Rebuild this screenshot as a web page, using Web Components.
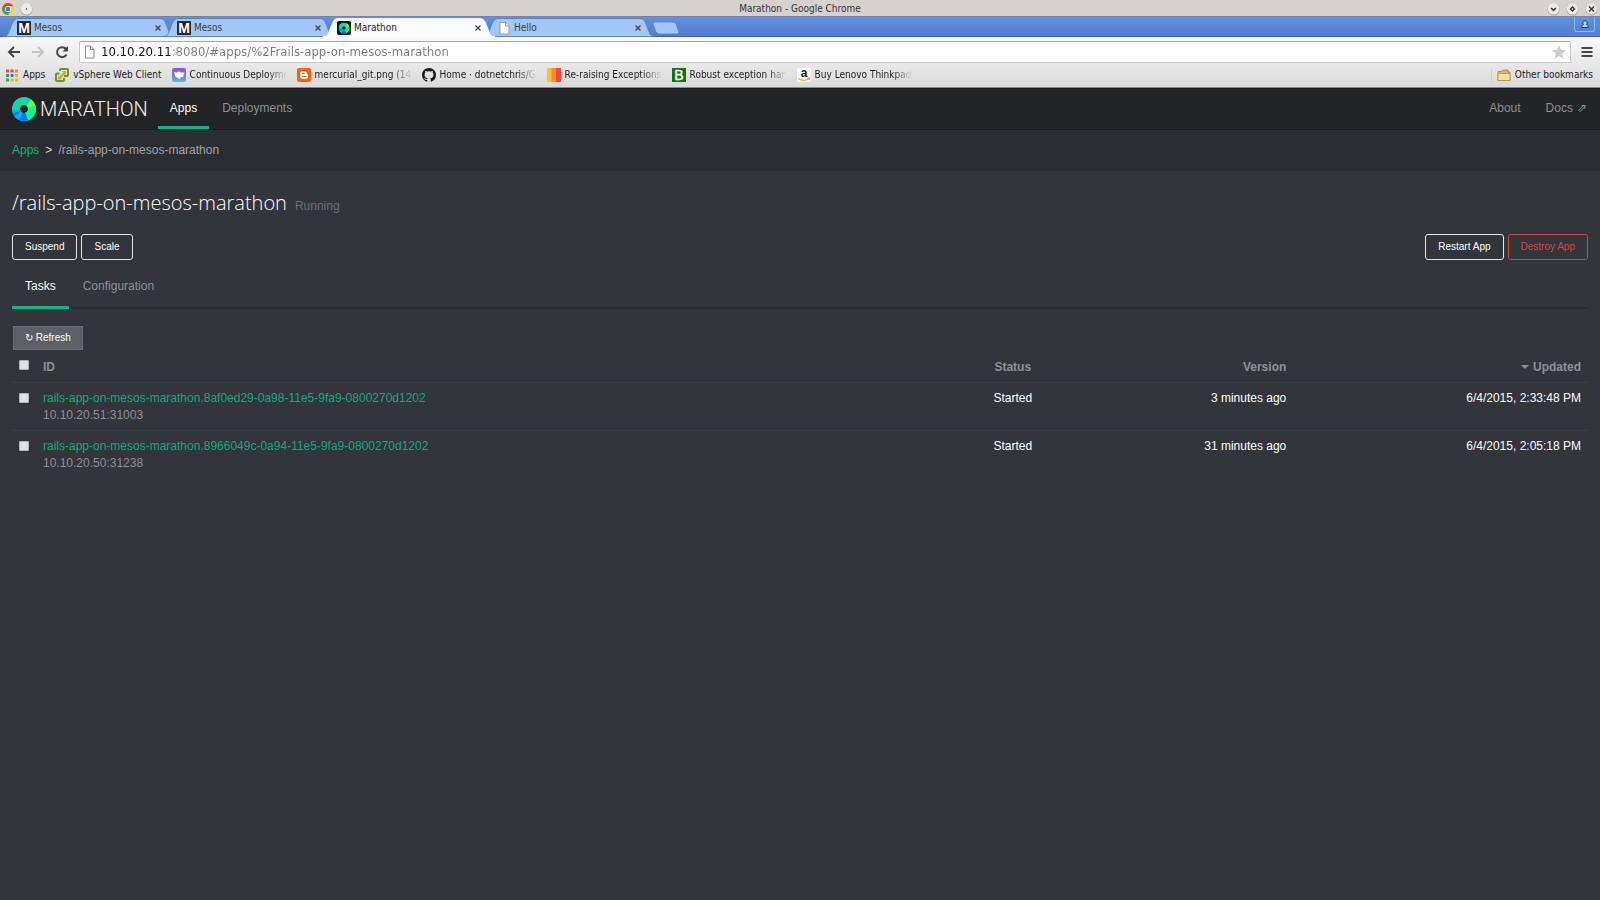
<!DOCTYPE html>
<html lang="en">
<head>
<meta charset="utf-8">
<title>Marathon</title>
<style>
  html,body{margin:0;height:100%}
  body{background:#32353a;font-family:"Liberation Sans",Arial,sans-serif;font-size:12px;line-height:17px;color:#fff}
</style>
</head>
<body>
<browser-window heading="Marathon - Google Chrome">
  <browser-tab slot="tabs" icon="mesos">Mesos</browser-tab>
  <browser-tab slot="tabs" icon="mesos">Mesos</browser-tab>
  <browser-tab slot="tabs" icon="marathon" active>Marathon</browser-tab>
  <browser-tab slot="tabs" icon="page">Hello</browser-tab>

  <book-mark slot="bookmarks" icon="apps">Apps</book-mark>
  <book-mark slot="bookmarks" icon="vsphere">vSphere Web Client</book-mark>
  <book-mark slot="bookmarks" icon="codeship" faded>Continuous Deployme</book-mark>
  <book-mark slot="bookmarks" icon="blogger" faded>mercurial_git.png (14</book-mark>
  <book-mark slot="bookmarks" icon="github" faded>Home · dotnetchris/G</book-mark>
  <book-mark slot="bookmarks" icon="stripes" faded>Re-raising Exceptions</book-mark>
  <book-mark slot="bookmarks" icon="letterb" faded>Robust exception har</book-mark>
  <book-mark slot="bookmarks" icon="amazon" faded>Buy Lenovo Thinkpad</book-mark>
  <book-mark slot="other" icon="folder">Other bookmarks</book-mark>

  <marathon-nav></marathon-nav>
  <marathon-crumbs>/rails-app-on-mesos-marathon</marathon-crumbs>
  <marathon-app name="/rails-app-on-mesos-marathon" status="Running">
    <task-table></task-table>
  </marathon-app>
</browser-window>

<script>
(function () {
  const RING = `
    <g fill="none" stroke-width="8">
      <circle cx="12" cy="12" r="8" stroke="#10d8a8"/>
      <path d="M19.6 9.4A8 8 0 0 1 14.1 19.7" stroke="#00fc9a"/>
      <path d="M14.7 19.5A8 8 0 0 1 8.2 19" stroke="#0078ff"/>
      <path d="M8.8 19.3A8 8 0 0 1 4 12.7" stroke="#08b0fa"/>
      <path d="M5.6 16.8A8 8 0 0 1 4.6 15" stroke="#0078ff"/>
      <path d="M16.8 5.6A8 8 0 0 1 19.6 9.6" stroke="#76f81c"/>
    </g>`;

  // favicons, all on a 14x14 box
  const ICONS = {
    mesos: `<rect width="14" height="14" rx="1" fill="#1b1b1b"/><rect x="1" y="1" width="12" height="12" fill="none" stroke="#555" stroke-width=".5"/><text x="7" y="12" text-anchor="middle" font-family="Liberation Sans" font-weight="700" font-size="14" fill="#fff">M</text>`,
    marathon: `<rect width="14" height="14" rx="2" fill="#0b0b14"/><svg x="1.5" y="1.5" width="11" height="11" viewBox="0 0 24 24">${RING}</svg>`,
    page: `<path d="M3 1.5h5.5L12 5v8H3z" fill="#fff" stroke="#9a9a9a"/><path d="M8.5 1.5V5H12" fill="#eee" stroke="#9a9a9a"/>`,
    apps: `<path d="M1 1.500h3v3H1zM5.500 1.500h3v3h-3z" fill="#e8453c"/><path d="M10 1.500h3v3h-3z" fill="#f08a24"/><path d="M1 6h3v3H1zM1 10.500h3v3H1z" fill="#2f9e4f"/><path d="M5.500 6h3v3h-3z" fill="#3b78e7"/><path d="M10 6h3v3h-3zM5.500 10.500h3v3h-3zM10 10.500h3v3h-3z" fill="#f4b400"/>`,
    vsphere: `<path d="M5 3V2a1 1 0 0 1 1-1h6a1 1 0 0 1 1 1v5a1 1 0 0 1-1 1H9" fill="none" stroke="#5b9b2c" stroke-width="2"/><path d="M4.500 5.500H2a1 1 0 0 0-1 1V12a1 1 0 0 0 1 1h6a1 1 0 0 0 1-1v-2" fill="none" stroke="#5b9b2c" stroke-width="2"/><path d="M3.500 11.500L10.500 3.500" stroke="#e9a52a" stroke-width="2.500"/><path d="M7 3h4v4z" fill="#e9a52a"/><path d="M3 7v4h4z" fill="#e9a52a"/>`,
    codeship: `<linearGradient id="g" x2="0" y2="1"><stop stop-color="#9a55cf"/><stop offset=".5" stop-color="#8a6fd6"/><stop offset="1" stop-color="#4cc4dc"/></linearGradient><rect width="14" height="14" rx="2" fill="url(#g)"/><path d="M2 4l2.500.5L7 3.500l2 1 3.500 0L11 9H9l-1.500 2L5 9.500 3.500 9z" fill="#fff"/>`,
    blogger: `<rect width="14" height="14" rx="2" fill="#f8630d"/><path d="M5.500 3h2.300a2 2 0 0 1 2 2c0 1 .2 1.200 1.200 1.400v2.300A2.300 2.300 0 0 1 8.700 11H5.500A2.300 2.300 0 0 1 3.200 8.700V5.300A2.300 2.300 0 0 1 5.500 3z" fill="#fff"/><path d="M5.500 5.500h2M5.500 8.500h3.200" stroke="#f8630d" stroke-linecap="round" stroke-width="1.200"/>`,
    github: `<path transform="scale(.875)" fill="#1b1b1b" d="M8 0C3.580 0 0 3.580 0 8c0 3.540 2.290 6.530 5.470 7.590.4.070.55-.17.55-.38 0-.19-.01-.82-.01-1.490-2.010.37-2.530-.49-2.690-.94-.09-.23-.48-.94-.82-1.130-.28-.15-.68-.52-.01-.53.63-.01 1.080.58 1.230.82.72 1.210 1.870.87 2.330.66.07-.52.28-.87.51-1.070-1.780-.2-3.640-.89-3.640-3.950 0-.87.31-1.590.82-2.150-.08-.2-.36-1.020.08-2.120 0 0 .67-.21 2.200.82a7.400 7.400 0 0 1 4 0c1.530-1.040 2.200-.82 2.200-.82.44 1.100.16 1.920.08 2.120.51.56.82 1.270.82 2.150 0 3.070-1.870 3.750-3.650 3.950.29.25.54.73.54 1.480 0 1.070-.01 1.930-.01 2.200 0 .21.15.46.55.38A8 8 0 0 0 16 8c0-4.420-3.580-8-8-8z"/>`,
    stripes: `<rect width="14" height="14" rx="1" fill="#f9c22e"/><path d="M4.500 0h5v14h-5z" fill="#f98b32"/><path d="M9 0h4a1 1 0 0 1 1 1v12a1 1 0 0 1-1 1H9z" fill="#f9453f"/>`,
    letterb: `<path d="M0 0h14v14H0z" fill="#0b760b"/><text x="7" y="12" text-anchor="middle" font-family="Liberation Sans" font-size="14" fill="#fff" stroke="#fff" stroke-width=".4">B</text>`,
    amazon: `<rect width="14" height="14" rx="2" fill="#fff"/><text x="7" y="9" text-anchor="middle" font-family="Liberation Sans" font-weight="700" font-size="12" fill="#111">a</text><path d="M1.500 10.500c3 2.500 7.500 2.500 10.500.300M10.500 10.200l2-.2-.5 2" fill="none" stroke="#f2a71b" stroke-width="1.300"/>`,
    folder: `<path d="M1 3.500h4l1-1.500h5v2h2v8.500H1z" fill="#e6b566" stroke="#a8792f" stroke-width=".8"/><path d="M1 5.500h12v7H1z" fill="#fbdf9d" stroke="#b98a40" stroke-width=".8"/>`
  };
  const icon = (name) => `<svg class="icon" width="14" height="14" viewBox="0 0 14 14" aria-hidden="true">${ICONS[name] || ""}</svg>`;

  class Base extends HTMLElement {
    connectedCallback() {
      if (this.shadowRoot) return;
      this.attachShadow({ mode: "open" }).innerHTML =
        `<style>*,*::before,*::after{box-sizing:border-box}button{font:inherit;color:inherit}${this.css()}</style>${this.html()}`;
    }
    css() { return ""; }
    html() { return "<slot></slot>"; }
  }

  class BrowserTab extends Base {
    css() {
      return `
        :host{display:grid;flex:0 0 172px;height:19px;margin-right:-12px;color:#3c3c3c;--fill:#a2c6f5;--line:#5278b4}
        :host([active]){position:relative;z-index:1;color:#222;--fill:#fbfbfb;--line:#fbfbfb}
        .shape,.row{grid-area:1/1}
        .shape{width:100%;height:19px}
        .row{display:flex;align-items:center;gap:3px;padding:0 13px 0 14px}
        .title{flex:1;overflow:hidden;white-space:nowrap}
        button{width:8px;height:8px;padding:0;border:0;background:none;display:flex}
        .icon{flex:none}`;
    }
    html() {
      return `
        <svg class="shape" viewBox="0 0 172 19" preserveAspectRatio="none" aria-hidden="true">
          <path d="M0 19C5 19 5 16 7 11C10 4 10 1 15 .5H157C162 1 162 4 165 11C167 16 167 19 172 19Z" style="fill:var(--fill)"/>
          <path d="M0 18.500C5 18.500 5 16 7 11C10 4 10 1 15 .5H157C162 1 162 4 165 11C167 16 167 18.500 172 18.500Z" fill="none" style="stroke:var(--line)" stroke-width=".8"/>
        </svg>
        <div class="row">${icon(this.getAttribute("icon"))}<span class="title"><slot></slot></span>
          <button aria-label="Close tab"><svg width="8" height="8" viewBox="0 0 8 8"><path d="M1.500 1.500l5 5M6.500 1.500l-5 5" stroke="#444" stroke-width="1.300"/></svg></button>
        </div>`;
    }
  }

  class BookMark extends Base {
    css() {
      return `
        :host{display:block;flex:none}
        a{display:flex;align-items:center;gap:4px;color:#1c1c1c;text-decoration:none;white-space:nowrap}
        .icon{flex:none}
        :host([faded]) span{width:97px;overflow:hidden;-webkit-mask-image:linear-gradient(90deg,#000 80%,transparent);mask-image:linear-gradient(90deg,#000 80%,transparent)}`;
    }
    html() { return `<a href="#">${icon(this.getAttribute("icon"))}<span><slot></slot></span></a>`; }
  }

  class BrowserWindow extends Base {
    css() {
      return `
        :host{display:flex;flex-direction:column;min-height:100%}
        .chrome{font-family:"DejaVu Sans Condensed","DejaVu Sans",sans-serif;font-size:10px;line-height:14px;color:#333}
        button{padding:0;border:0;background:none;display:flex}
        .title{display:grid;grid-template-columns:1fr auto 1fr;align-items:center;height:16px;padding:1px 2px 0;background:#d6d2ce}
        .group{display:flex;align-items:center;gap:6px}
        .right{justify-content:flex-end}
        .strip{display:flex;align-items:flex-end;height:21px;padding-left:3px;background:linear-gradient(#6593e0,#4c7bd0);box-shadow:inset 0 1px #6f84b4,inset 0 -1px #41639f}
        .new{margin:0 0 2px 9px}
        .user{align-self:flex-start;margin:1px 5px 0 auto;width:21px;height:15px;justify-content:center;align-items:center;border:1px solid #82bdf0;border-top:0;border-radius:0 0 3px 3px}
        .tools{background:linear-gradient(#f8f8f8,#dadada);border-bottom:1px solid #8a8a8a}
        .bar{display:flex;align-items:center;height:29px;padding:0 7px;gap:10px}
        .omni{flex:1;display:flex;align-items:center;height:22px;gap:5px;padding:0 4px;background:#fff;border:1px solid #c6c6c6;border-top-color:#a8a8a8;border-radius:2px}
        input{flex:1;min-width:0;padding:0;border:0;outline:0;font:inherit;font-size:13px;line-height:18px;color:transparent;
          background:linear-gradient(90deg,#111 72px,#7b7b7b 72px);-webkit-background-clip:text;background-clip:text}
        .marks{display:flex;align-items:center;height:21px;padding:0 7px 4px 5px;gap:10px}
        .other{margin-left:auto;border-left:1px solid #c4d8da;padding-left:5px}
        main{flex:1;display:flex;flex-direction:column}`;
    }
    html() {
      const knob = (label, d) => `<button aria-label="${label}"><svg width="13" height="14" viewBox="0 0 13 14"><circle cx="6.500" cy="7.500" r="6" fill="#9f9b98"/><circle cx="6.500" cy="6.800" r="5.800" fill="#eceae8"/><path d="${d}" fill="none" stroke="#333" stroke-width="1.400"/></svg></button>`;
      return `
        <div class="chrome">
          <div class="title">
            <div class="group">
              <svg width="12" height="12" viewBox="0 0 24 24" aria-hidden="true"><circle cx="12" cy="12" r="12" fill="#f7cf2c"/><path d="M1.600 6A12 12 0 0 0 12 24l5-9-5-3z" fill="#3fa651"/><path d="M12 6h10.400A12 12 0 0 0 1.600 6L7 15z" fill="#df4230"/><circle cx="12" cy="12" r="5.800" fill="#fff"/><circle cx="12" cy="12" r="4.600" fill="#3f7fdc"/></svg>
              ${knob("Window menu", "M6 7h1")}
            </div>
            <span>${this.getAttribute("heading")}</span>
            <div class="group right">
              ${knob("Minimize", "M4 6l2.500 2.500L9 6")}
              ${knob("Maximize", "M6.500 5L8.500 7L6.500 9L4.500 7Z")}
              ${knob("Close", "M4 4.500l5 5M9 4.500l-5 5")}
            </div>
          </div>
          <div class="strip">
            <slot name="tabs"></slot>
            <button class="new" aria-label="New tab"><svg width="28" height="14" viewBox="0 0 28 14"><path d="M3 1h17q3 0 4 2l3 8q0 2-2 2H8q-3 0-4-2L1 3q0-2 2-2z" fill="#a2c6f5" stroke="#5d83c0" stroke-width=".8"/></svg></button>
            <button class="user" aria-label="User"><svg width="10" height="10" viewBox="0 0 10 10"><path d="M1.500 8.500q0-2.500 2-3a2.200 2.200 0 1 1 3 0q2 .5 2 3z" fill="#a9d8f6" stroke="#1d3d70"/></svg></button>
          </div>
          <div class="tools">
            <div class="bar">
              <button aria-label="Back"><svg width="14" height="14" viewBox="0 0 14 14"><path d="M7 2L2 7l5 5M2 7h11" fill="none" stroke="#444" stroke-width="2"/></svg></button>
              <button aria-label="Forward"><svg width="14" height="14" viewBox="0 0 14 14"><path d="M7 2l5 5-5 5M12 7H1" fill="none" stroke="#c4c4c4" stroke-width="2"/></svg></button>
              <button aria-label="Reload"><svg width="14" height="14" viewBox="0 0 14 14"><path d="M11.500 9.500A5 5 0 1 1 11 4" fill="none" stroke="#444" stroke-width="2"/><path d="M13 1v5.500H7.500z" fill="#444"/></svg></button>
              <div class="omni">
                <svg width="12" height="14" viewBox="0 0 12 14" aria-hidden="true"><path d="M1.500 1h5L10 4.500V13H1.500z" fill="#fff" stroke="#8a8a8a"/><path d="M6.500 1v3.500H10" fill="none" stroke="#8a8a8a"/></svg>
                <input aria-label="Address" spellcheck="false" value="10.10.20.11:8080/#apps/%2Frails-app-on-mesos-marathon">
                <button aria-label="Bookmark this page"><svg width="14" height="14" viewBox="0 0 14 14"><path d="M7 0l2 4.800 5 .4-3.800 3.300L11.400 14 7 11 2.600 14l1.200-5.500L0 5.200l5-.4z" fill="#cbcbcb"/></svg></button>
              </div>
              <button aria-label="Menu"><svg width="12" height="12" viewBox="0 0 12 12"><path d="M.5 2h11M.5 6h11M.5 10h11" stroke="#444" stroke-width="2"/></svg></button>
            </div>
            <div class="marks">
              <slot name="bookmarks"></slot>
              <div class="other"><slot name="other"></slot></div>
            </div>
          </div>
        </div>
        <main><slot></slot></main>`;
    }
  }

  class MarathonNav extends Base {
    css() {
      return `
        :host{display:block;background:#222426;border-top:1px solid #17181a;border-bottom:1px solid #1c1e20}
        nav{display:flex;align-items:stretch;height:40px;padding:0 12px}
        .logo{display:flex;align-items:center;gap:4px;margin-right:10px;font:300 20px/24px Roboto,sans-serif;color:#f2f0ee}
        a{display:flex;align-items:center;padding:3px 12px 2px;border-bottom:3px solid transparent;color:#8e9094;text-decoration:none;margin-right:1px}
        a[aria-current]{color:#fff;border-color:#0cb68a}
        .right{display:flex;margin-left:auto}
        .right a:last-child{padding-right:0}
        .out{font-family:"DejaVu Sans",sans-serif;margin-left:4px}`;
    }
    html() {
      return `
        <nav>
          <div class="logo"><svg width="24" height="24" viewBox="0 0 24 24" aria-hidden="true">${RING}</svg>MARATHON</div>
          <a href="#apps" aria-current="page">Apps</a>
          <a href="#deployments">Deployments</a>
          <div class="right"><a href="#about">About</a><a href="#docs">Docs <span class="out">⇗</span></a></div>
        </nav>`;
    }
  }

  class MarathonCrumbs extends Base {
    css() {
      return `
        :host{display:flex;align-items:center;gap:6px;height:41px;padding:0 12px;background:#2b2e31;color:#a0a2a5}
        a{color:#10b184;text-decoration:none}
        .sep{color:#d5d5d5}`;
    }
    html() { return `<a href="#apps">Apps</a><span class="sep">&gt;</span><span><slot></slot></span>`; }
  }

  class MarathonApp extends Base {
    css() {
      return `
        :host{display:block;padding:18px 12px}
        header{display:flex;align-items:baseline;gap:8px}
        h1{margin:0;font:300 20px/28px "Open Sans",sans-serif}
        .status{color:#6b7077}
        .actions{display:flex;gap:4px;margin-top:17px;font-size:10px;line-height:14px}
        .actions button{height:26px;padding:0 12px;background:none;border:1px solid #e6e6e6;border-radius:3px}
        .actions .push{margin-left:auto}
        .actions .danger{color:#d5483f;border-color:#c9473d}
        .tabs{display:flex;gap:1px;margin-top:4px;border-bottom:2px solid #2a2c2f}
        .tabs a{padding:14px 13px 11px;margin-bottom:-2px;border-bottom:3px solid transparent;color:#8e9196;text-decoration:none}
        .tabs a[aria-current]{color:#fff;border-color:#0cb68a}
        .refresh{display:block;height:24px;margin:17px 0 2px 1px;padding:0 11px;border:1px solid #6a6d73;background:#5c5f66;font-size:10px;line-height:14px}`;
    }
    html() {
      return `
        <header><h1>${this.getAttribute("name")}</h1><span class="status">${this.getAttribute("status")}</span></header>
        <div class="actions">
          <button>Suspend</button><button>Scale</button>
          <button class="push">Restart App</button><button class="danger">Destroy App</button>
        </div>
        <div class="tabs"><a href="#tasks" aria-current="page">Tasks</a><a href="#configuration">Configuration</a></div>
        <button class="refresh">↻ Refresh</button>
        <slot></slot>`;
    }
  }

  const TASKS = [
    { id: "rails-app-on-mesos-marathon.8af0ed29-0a98-11e5-9fa9-0800270d1202", host: "10.10.20.51:31003", status: "Started", version: "3 minutes ago", updated: "6/4/2015, 2:33:48 PM" },
    { id: "rails-app-on-mesos-marathon.8966049c-0a94-11e5-9fa9-0800270d1202", host: "10.10.20.50:31238", status: "Started", version: "31 minutes ago", updated: "6/4/2015, 2:05:18 PM" }
  ];

  class TaskTable extends Base {
    css() {
      return `
        :host{display:block}
        table{width:100%;table-layout:fixed;border-collapse:collapse}
        th,td{padding:7px 7px 6px;text-align:left;vertical-align:top}
        td{border-top:1px solid #3c3f45}
        th{color:#8e9196}
        .check{width:24px;padding-right:0}
        .status{width:9.6%;text-align:center}
        .version{width:13%;text-align:right}
        .updated{width:18.7%;text-align:right}
        .caret{display:inline-block;margin-right:4px;vertical-align:2px;border:4px solid transparent;border-top-color:currentColor;border-bottom:0}
        a{color:#10ab7e;text-decoration:none}
        .host{color:#8e9196}
        input{appearance:none;display:block;width:10px;height:10px;margin:3px 0 0;background:#e2e1e0;border:1px solid #b4b2b0;border-radius:1px}
        th input{margin-top:1px}
        input:checked{background:#0cb68a}`;
    }
    html() {
      return `
        <table>
          <thead><tr>
            <th class="check"><input type="checkbox" aria-label="Select all tasks"></th>
            <th>ID</th><th class="status">Status</th><th class="version">Version</th>
            <th class="updated"><span class="caret"></span>Updated</th>
          </tr></thead>
          <tbody>${TASKS.map((t) => `
            <tr>
              <td class="check"><input type="checkbox" aria-label="Select ${t.host}"></td>
              <td><a href="#${t.id}">${t.id}</a><div class="host">${t.host}</div></td>
              <td class="status">${t.status}</td><td class="version">${t.version}</td><td class="updated">${t.updated}</td>
            </tr>`).join("")}
          </tbody>
        </table>`;
    }
  }

  customElements.define("browser-tab", BrowserTab);
  customElements.define("book-mark", BookMark);
  customElements.define("browser-window", BrowserWindow);
  customElements.define("marathon-nav", MarathonNav);
  customElements.define("marathon-crumbs", MarathonCrumbs);
  customElements.define("marathon-app", MarathonApp);
  customElements.define("task-table", TaskTable);
})();
</script>
</body>
</html>
